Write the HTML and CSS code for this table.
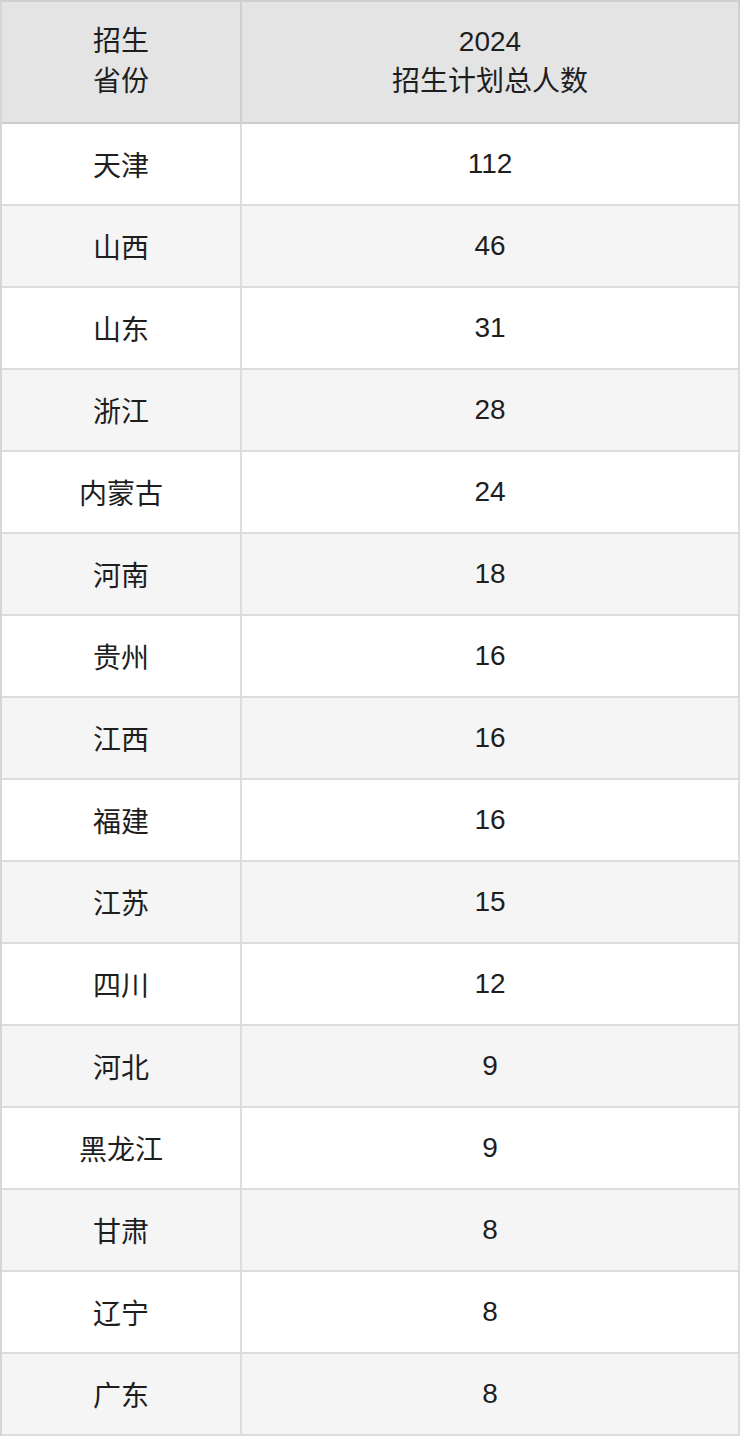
FILE: index.html
```html
<!DOCTYPE html>
<html lang="zh-CN">
<head>
<meta charset="utf-8">
<title>招生计划</title>
<link rel="stylesheet" href="styles.css">
</head>
<body>
<table class="plan">
  <thead>
    <tr class="head-row">
      <th class="col-prov">招生<br>省份</th>
      <th class="col-num">2024<br>招生计划总人数</th>
    </tr>
  </thead>
  <tbody>
    <tr><td>天津</td><td>112</td></tr>
    <tr><td>山西</td><td>46</td></tr>
    <tr><td>山东</td><td>31</td></tr>
    <tr><td>浙江</td><td>28</td></tr>
    <tr><td>内蒙古</td><td>24</td></tr>
    <tr><td>河南</td><td>18</td></tr>
    <tr><td>贵州</td><td>16</td></tr>
    <tr><td>江西</td><td>16</td></tr>
    <tr><td>福建</td><td>16</td></tr>
    <tr><td>江苏</td><td>15</td></tr>
    <tr><td>四川</td><td>12</td></tr>
    <tr><td>河北</td><td>9</td></tr>
    <tr><td>黑龙江</td><td>9</td></tr>
    <tr><td>甘肃</td><td>8</td></tr>
    <tr><td>辽宁</td><td>8</td></tr>
    <tr><td>广东</td><td>8</td></tr>
  </tbody>
</table>
</body>
</html>
```
FILE: styles.css
```css
html, body {
  margin: 0;
  padding: 0;
  background: #ffffff;
}

.plan {
  width: 740px;
  border-collapse: separate;
  border-spacing: 0;
  border-top: 2px solid #cfcfcf;
  border-left: 2px solid #d6d6d6;
  font-family: "Liberation Sans", "Noto Sans CJK SC", sans-serif;
  font-size: 28px;
  color: #1e1e1e;
  table-layout: fixed;
}

.plan th,
.plan td {
  padding: 0;
  text-align: center;
  vertical-align: middle;
  border-right: 2px solid #dcdcdc;
  border-bottom: 2px solid #dcdcdc;
  font-weight: normal;
}

.col-prov {
  width: 238px;
}

.col-num {
  width: 496px;
}

.plan th {
  background: #e4e4e4;
  line-height: 40px;
  border-bottom-color: #cdcdcd;
  border-right-color: #cfcfcf;
}

.head-row {
  height: 122px;
}

.plan tbody tr {
  height: 82px;
}

.plan tbody tr:nth-child(even) td {
  background: #f5f5f5;
}
```
